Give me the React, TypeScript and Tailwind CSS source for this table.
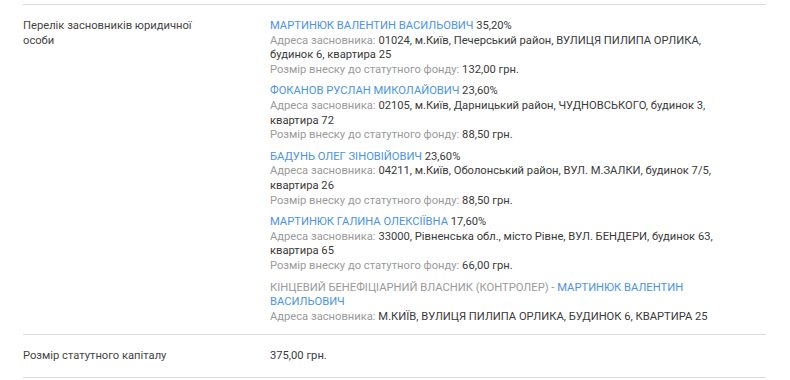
import React from "react";

const founders = [
  {
    name: "МАРТИНЮК ВАЛЕНТИН ВАСИЛЬОВИЧ",
    pct: "35,20%",
    addr: "01024, м.Київ, Печерський район, ВУЛИЦЯ ПИЛИПА ОРЛИКА, будинок 6, квартира 25",
    sum: "132,00 грн.",
  },
  {
    name: "ФОКАНОВ РУСЛАН МИКОЛАЙОВИЧ",
    pct: "23,60%",
    addr: "02105, м.Київ, Дарницький район, ЧУДНОВСЬКОГО, будинок 3, квартира 72",
    sum: "88,50 грн.",
  },
  {
    name: "БАДУНЬ ОЛЕГ ЗІНОВІЙОВИЧ",
    pct: "23,60%",
    addr: "04211, м.Київ, Оболонський район, ВУЛ. М.ЗАЛКИ, будинок 7/5, квартира 26",
    sum: "88,50 грн.",
  },
  {
    name: "МАРТИНЮК ГАЛИНА ОЛЕКСІЇВНА",
    pct: "17,60%",
    addr: "33000, Рівненська обл., місто Рівне, ВУЛ. БЕНДЕРИ, будинок 63, квартира 65",
    sum: "66,00 грн.",
  },
];

export default function App() {
  return (
    <div
      className="w-[790px] h-[380px] bg-white overflow-hidden text-[11.2px] leading-[14.6px] text-[#3a3a3a]"
      style={{ fontFamily: "Roboto, 'Liberation Sans', sans-serif" }}
    >
      <div className="ml-[23px] w-[743px] mt-[4px] border-t border-[#dcdcdc]">
        <div className="flex pt-[14px] pb-[10px]">
          <div className="w-[247px] shrink-0 pr-[65px] text-[#444]">
            Перелік засновників юридичної особи
          </div>
          <div className="w-[465px]">
            {founders.map((f, i) => (
              <div key={i} className="mb-[7px]">
                <div>
                  <span className="text-[#4b94e4]">{f.name}</span> {f.pct}
                </div>
                <div>
                  <span className="text-[#9a9a9a]">Адреса засновника:</span> {f.addr}
                </div>
                <div>
                  <span className="text-[#9a9a9a]">Розмір внеску до статутного фонду:</span> {f.sum}
                </div>
              </div>
            ))}
            <div>
              <div>
                <span className="text-[#9a9a9a]">КІНЦЕВИЙ БЕНЕФІЦІАРНИЙ ВЛАСНИК (КОНТРОЛЕР) -</span>{" "}
                <span className="text-[#4b94e4]">МАРТИНЮК ВАЛЕНТИН ВАСИЛЬОВИЧ</span>
              </div>
              <div>
                <span className="text-[#9a9a9a]">Адреса засновника:</span> М.КИЇВ, ВУЛИЦЯ ПИЛИПА ОРЛИКА, БУДИНОК 6, КВАРТИРА 25
              </div>
            </div>
          </div>
        </div>
        <div className="border-t border-[#dcdcdc] flex pt-[14px] pb-[13px]">
          <div className="w-[247px] shrink-0 text-[#444]">Розмір статутного капіталу</div>
          <div>375,00 грн.</div>
        </div>
        <div className="border-t border-[#dcdcdc]" />
      </div>
    </div>
  );
}
